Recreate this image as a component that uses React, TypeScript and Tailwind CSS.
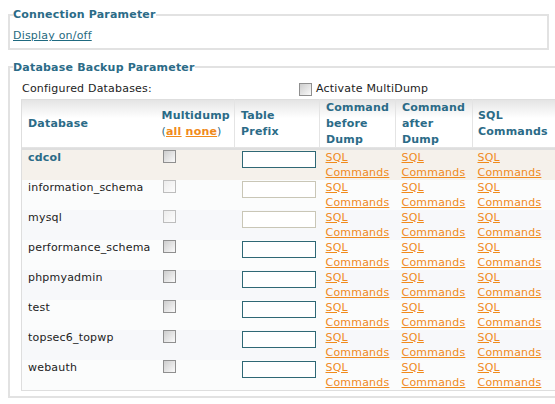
import React from 'react'

type Db = { name: string; enabled: boolean }

const DATABASES: Db[] = [
  { name: 'cdcol', enabled: true },
  { name: 'information_schema', enabled: false },
  { name: 'mysql', enabled: false },
  { name: 'performance_schema', enabled: true },
  { name: 'phpmyadmin', enabled: true },
  { name: 'test', enabled: true },
  { name: 'topsec6_topwp', enabled: true },
  { name: 'webauth', enabled: true },
]

function Checkbox({ disabled = false }: { disabled?: boolean }) {
  return (
    <span
      className={`inline-block w-[13px] h-[13px] border ${
        disabled
          ? 'border-[#bdbdbd] bg-linear-to-br from-[#ececec] to-[#fdfdfd]'
          : 'border-[#8f8f8f] bg-linear-to-br from-[#cdcdcd] to-[#fafafa]'
      }`}
    />
  )
}

function SqlLink() {
  return (
    <a className="text-[#f08a1c] underline cursor-pointer">
      SQL
      <br />
      Commands
    </a>
  )
}

export default function App() {
  return (
    <div className="w-[555px] h-[404px] overflow-hidden bg-white font-['DejaVu_Sans',Verdana,sans-serif] text-[11px] tracking-[0.2px] text-[#222]">
      <div className="w-[557px] p-2">
        {/* Connection */}
        <fieldset className="border-2 border-[#e2e2e2] px-[3px] pt-[7px] pb-[3px]">
          <legend className="font-bold text-[#2b6b87] leading-[13px]">Connection Parameter</legend>
          <a className="text-[#1f6a80] underline leading-[13px] cursor-pointer">Display on/off</a>
        </fieldset>

        {/* Backup */}
        <fieldset className="mt-[11px] border-2 border-[#e2e2e2] px-[3px] pb-[5px]">
          <legend className="font-bold text-[#2b6b87] leading-[13px]">Database Backup Parameter</legend>
          <div className="pl-2">
            <div className="flex items-center h-[18px] mt-[7px]">
              <span className="w-[278px] pl-px">Configured Databases:</span>
              <Checkbox />
              <span className="ml-[4px]">Activate MultiDump</span>
            </div>

            <table className="table-fixed border-collapse w-[545px] border border-[#dedede]">
              <colgroup>
                <col className="w-[134px]" />
                <col className="w-[79px]" />
                <col className="w-[85px]" />
                <col className="w-[76px]" />
                <col className="w-[77px]" />
                <col className="w-[94px]" />
              </colgroup>
              <thead>
                <tr className="h-[49px] border-b-2 border-[#dedede] bg-linear-to-b from-[#e3e3e3] to-white to-40% font-bold text-[#2b6b87] leading-[16px]">
                  <th className="text-left font-bold pl-[6px] align-middle">Database</th>
                  <th className="text-left font-bold pl-[6px] align-middle">
                    Multidump
                    <br />
                    <span className="font-normal">(</span>
                    <a className="text-[#f08a1c] underline">all</a>{' '}
                    <a className="text-[#f08a1c] underline">none</a>
                    <span className="font-normal">)</span>
                  </th>
                  <th className="text-left font-bold pl-[6px] align-middle border-l border-[#e4e4e4]">
                    Table
                    <br />
                    Prefix
                  </th>
                  <th className="text-left font-bold pl-[6px] align-middle border-l border-[#e4e4e4]">
                    Command
                    <br />
                    before
                    <br />
                    Dump
                  </th>
                  <th className="text-left font-bold pl-[6px] align-middle border-l border-[#e4e4e4]">
                    Command
                    <br />
                    after
                    <br />
                    Dump
                  </th>
                  <th className="text-left font-bold pl-[5px] align-middle border-l border-[#e4e4e4]">
                    SQL
                    <br />
                    Commands
                  </th>
                </tr>
              </thead>
              <tbody>
                {DATABASES.map((db, i) => {
                  const bg = i === 0 ? 'bg-[#f5f1eb]' : i % 2 === 1 ? 'bg-[#fbfcfc]' : 'bg-[#f7f8fa]'
                  return (
                    <tr key={db.name} className={`h-[30px] leading-[15px] ${bg}`}>
                      <td className={`align-top pl-[6px] ${i === 0 ? 'font-bold text-[#2b6b87]' : ''}`}>
                        {db.name}
                      </td>
                      <td className="align-top pl-[7px]">
                        <Checkbox disabled={!db.enabled} />
                      </td>
                      <td className="align-top pl-[7px] pt-px">
                        <div
                          className={`w-[74px] h-[17px] bg-white border ${
                            db.enabled ? 'border-[#2f6875]' : 'border-[#c9c6b6]'
                          }`}
                        />
                      </td>
                      <td className="align-top pl-[6px]">
                        <SqlLink />
                      </td>
                      <td className="align-top pl-[6px]">
                        <SqlLink />
                      </td>
                      <td className="align-top pl-[5px]">
                        <SqlLink />
                      </td>
                    </tr>
                  )
                })}
              </tbody>
            </table>
          </div>
        </fieldset>
      </div>
    </div>
  )
}
